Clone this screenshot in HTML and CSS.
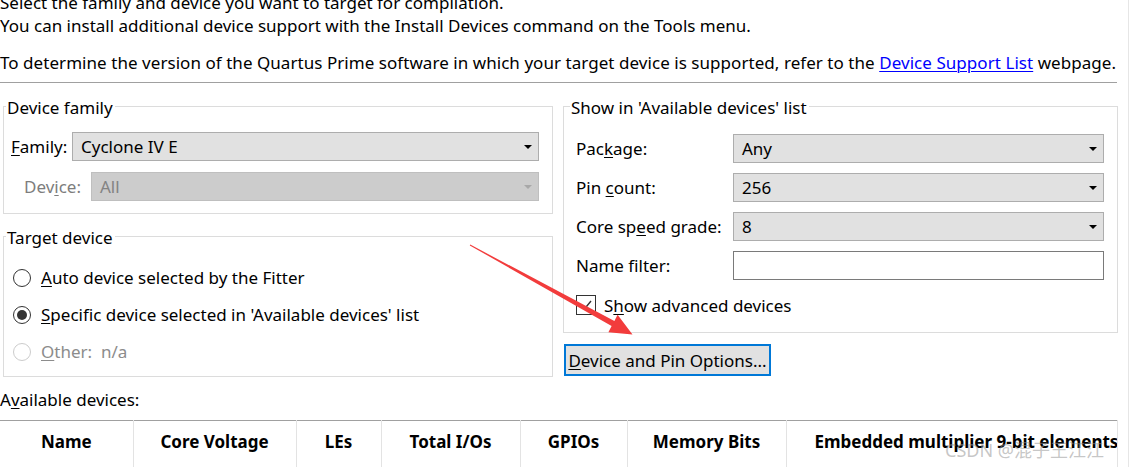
FILE: index.html
```html
<!DOCTYPE html>
<html lang="en">
<head>
<meta charset="UTF-8">
<link rel="stylesheet" href="styles.css">
<title>Device</title>
</head>
<body>
<div class="page">
    <div class="intro">
        <p class="intro-line cut">Select the family and device you want to target for compilation.</p>
        <p class="intro-line">You can install additional device support with the Install Devices command on the Tools menu.</p>
        <p class="intro-note">To determine the version of the Quartus Prime software in which your target device is supported, refer to the <a href="#">Device Support List</a> webpage.</p>
    </div>
    <div class="divider"></div>

    <div class="columns">
        <div class="col-left">
            <div class="group family-group">
                <div class="group-title">Device family</div>
                <div class="group-body">
                    <div class="field-row">
                        <span class="field-label family-label"><u>F</u>amily:</span>
                        <div class="combo"><span>Cyclone IV E</span><i class="caret"></i></div>
                    </div>
                    <div class="field-row">
                        <span class="field-label device-label disabled">Dev<u>i</u>ce:</span>
                        <div class="combo combo-disabled"><span>All</span><i class="caret"></i></div>
                    </div>
                </div>
            </div>

            <div class="group target-group">
                <div class="group-title">Target device</div>
                <div class="group-body">
                    <div class="radio-row">
                        <span class="radio"></span>
                        <span><u>A</u>uto device selected by the Fitter</span>
                    </div>
                    <div class="radio-row">
                        <span class="radio checked"></span>
                        <span><u>S</u>pecific device selected in 'Available devices' list</span>
                    </div>
                    <div class="radio-row disabled">
                        <span class="radio"></span>
                        <span><u>O</u>ther:&nbsp; n/a</span>
                    </div>
                </div>
            </div>
        </div>

        <div class="col-right">
            <div class="group show-group">
                <div class="group-title">Show in 'Available devices' list</div>
                <div class="group-body">
                    <div class="field-row">
                        <span class="field-label wide">Pac<u>k</u>age:</span>
                        <div class="combo"><span>Any</span><i class="caret"></i></div>
                    </div>
                    <div class="field-row">
                        <span class="field-label wide">Pin <u>c</u>ount:</span>
                        <div class="combo"><span>256</span><i class="caret"></i></div>
                    </div>
                    <div class="field-row">
                        <span class="field-label wide">Core sp<u>e</u>ed grade:</span>
                        <div class="combo"><span>8</span><i class="caret"></i></div>
                    </div>
                    <div class="field-row">
                        <span class="field-label wide">Name filter:</span>
                        <div class="text-input"></div>
                    </div>
                    <div class="check-row">
                        <span class="checkbox">
                            <svg width="18" height="18" viewBox="0 0 18 18"><path d="M4 9.5 L7.5 13 L14 5" fill="none" stroke="#333" stroke-width="1.4"/></svg>
                        </span>
                        <span>S<u>h</u>ow advanced devices</span>
                    </div>
                </div>
            </div>
            <button class="options-btn"><u>D</u>evice and Pin Options...</button>
        </div>
    </div>

    <div class="devices-label">A<u>v</u>ailable devices:</div>
    <table class="devices">
        <colgroup>
            <col style="width:133px">
            <col style="width:163px">
            <col style="width:85px">
            <col style="width:139px">
            <col style="width:107px">
            <col style="width:159px">
            <col>
        </colgroup>
        <thead>
            <tr>
                <th>Name</th>
                <th>Core Voltage</th>
                <th>LEs</th>
                <th>Total I/Os</th>
                <th>GPIOs</th>
                <th>Memory Bits</th>
                <th class="clip">Embedded multiplier 9-bit elements</th>
            </tr>
        </thead>
    </table>

    <!-- annotation drawn over the dialog -->
    <svg class="arrow" width="1134" height="467" viewBox="0 0 1134 467">
        <polygon points="469.8,245.4 470.2,244.6 614.4,320.9 617.6,314.8 632.5,334.5 608.4,332.2 611.6,326.1" fill="#f23c3c"/>
    </svg>
    <div class="watermark">CSDN @混子王江江</div>
</div>
</body>
</html>
```

FILE: styles.css
```css
body {
    margin: 0;
    background: #ffffff;
    font-family: "Noto Sans", "Noto Sans CJK SC", sans-serif;
    font-size: 17px;
    color: #000000;
}

.page {
    position: relative;
    width: 1128px;
    height: 467px;
    overflow: hidden;
    border-right: 1px solid #e6e6e6;
}

u {
    text-decoration-thickness: 1px;
    text-underline-offset: 2px;
}

/* intro text */
.intro p {
    margin: 0;
    line-height: 23px;
    white-space: nowrap;
}

.intro .cut {
    margin-top: -9px;
}

.intro-note {
    margin-top: 14px !important;
    letter-spacing: 0.05px;
}

.intro-note a {
    color: #0000ff;
    text-decoration-thickness: 1px;
    text-underline-offset: 2px;
}

.divider {
    width: 1117px;
    margin-top: 8px;
    border-top: 1px solid #a0a0a0;
}

/* columns */
.columns {
    display: flex;
    align-items: flex-start;
    gap: 10px;
    margin-top: 23px;
    padding-left: 3px;
}

.col-left {
    width: 550px;
}

.col-right {
    width: 555px;
    display: flex;
    flex-direction: column;
}

/* group boxes */
.group {
    border: 1px solid #dcdcdc;
}

.group-title {
    width: fit-content;
    margin: -10px 0 0 2px;
    padding: 0 2px 0 1px;
    line-height: 22px;
    background: #fff;
    white-space: nowrap;
}

.show-group .group-title {
    margin-left: 6px;
}

.family-group .group-body {
    padding: 13px 13px 12px 7px;
    display: flex;
    flex-direction: column;
    gap: 11px;
}

.target-group {
    margin-top: 22px;
}

.target-group .group-body {
    padding: 10px 8px 6px 8px;
}

.show-group .group-body {
    padding: 15px 13px 17px 12px;
    display: flex;
    flex-direction: column;
    gap: 10px;
}

/* form rows */
.field-row {
    display: flex;
    align-items: center;
}

.field-label {
    flex: none;
}

.family-label {
    width: 61px;
}

.device-label {
    width: 67px;
    margin-left: 13px;
}

.field-label.wide {
    width: 157px;
}

.disabled {
    color: #7d7d7d;
}

.combo {
    flex: 1;
    position: relative;
    height: 29px;
    box-sizing: border-box;
    border: 1px solid #adadad;
    background: #e1e1e1;
    display: flex;
    align-items: center;
    padding-left: 8px;
}

.combo-disabled {
    background: #cccccc;
    border-color: #bfbfbf;
    color: #838383;
}

.caret {
    position: absolute;
    right: 6px;
    top: 12px;
    width: 0;
    height: 0;
    border-left: 4px solid transparent;
    border-right: 4px solid transparent;
    border-top: 4px solid #000;
}

.combo-disabled .caret {
    border-top-color: #a8a8a8;
}

.text-input {
    flex: 1;
    height: 29px;
    box-sizing: border-box;
    border: 1px solid #7a7a7a;
    background: #fff;
}

/* radios and checkbox */
.radio-row {
    display: flex;
    align-items: center;
    gap: 10px;
    height: 37px;
}

.radio {
    width: 18px;
    height: 18px;
    box-sizing: border-box;
    border: 1px solid #333;
    border-radius: 50%;
    margin-left: 1px;
    display: flex;
    align-items: center;
    justify-content: center;
    background: #fff;
}

.radio.checked::after {
    content: "";
    width: 10px;
    height: 10px;
    border-radius: 50%;
    background: #333;
}

.radio-row.disabled {
    color: #8c8c8c;
}

.radio-row.disabled .radio {
    border-color: #cccccc;
}

.check-row {
    display: flex;
    align-items: center;
    gap: 8px;
    height: 20px;
    margin-top: 5px;
}

.checkbox {
    width: 20px;
    height: 20px;
    box-sizing: border-box;
    border: 1px solid #333;
    display: flex;
    align-items: center;
    justify-content: center;
}

.options-btn {
    align-self: flex-start;
    margin-top: 11px;
    margin-left: 1px;
    width: 207px;
    height: 32px;
    padding: 0;
    font: inherit;
    color: #000;
    background: #e1e1e1;
    border: 2px solid #0078d7;
}

/* devices table */
.devices-label {
    margin-top: 12px;
    line-height: 22px;
}

.devices {
    margin-top: 9px;
    width: 1118px;
    table-layout: fixed;
    border-collapse: collapse;
    border-top: 1px solid #a0a0a0;
    border-right: 1px solid #a0a0a0;
}

.devices th {
    height: 50px;
    padding: 10px 0 0 0;
    line-height: 22px;
    vertical-align: top;
    font-weight: bold;
    text-align: center;
    border-right: 1px solid #e3e3e3;
    white-space: nowrap;
    overflow: hidden;
}

.devices th.clip {
    text-align: left;
    padding-left: 28px;
}

/* screenshot annotations */
.arrow {
    position: absolute;
    left: 0;
    top: 0;
    pointer-events: none;
}

.watermark {
    position: absolute;
    left: 945px;
    top: 436px;
    font-size: 18px;
    color: rgba(150, 150, 150, 0.55);
    white-space: nowrap;
}
```
